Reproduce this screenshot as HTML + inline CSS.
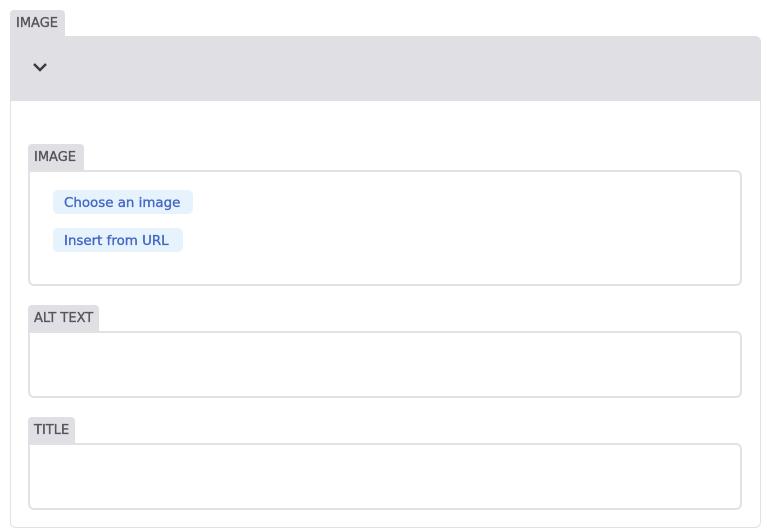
<!DOCTYPE html>
<html><head><style>
*{box-sizing:border-box;margin:0;padding:0}
body{width:767px;height:531px;background:#fff;font-family:"DejaVu Sans","Liberation Sans",sans-serif;position:relative;overflow:hidden}
.tab{position:absolute;background:#e0dfe4;color:#55545c;font-size:13px;line-height:28px;padding-left:6px;border-radius:4px 4px 0 0;-webkit-text-stroke:0.35px #55545c}
.box{position:absolute;border:2px solid #e2e2e6;border-radius:0 6px 6px 6px;background:#fff}
.btn{position:absolute;background:#e6f3fd;color:#4466c4;font-size:13.4px;line-height:27px;padding-left:11px;border-radius:5px;-webkit-text-stroke:0.35px #4466c4}
</style></head><body>
<div class="tab" style="left:10px;top:10px;width:55px;height:27px">IMAGE</div>
<div style="position:absolute;left:10px;top:36px;width:751px;height:492px;border:1.5px solid #e2e2e6;border-radius:0 6px 6px 6px"></div>
<div style="position:absolute;left:10px;top:36px;width:751px;height:65px;background:#e0dfe4;border-radius:0 6px 0 0"></div>
<svg style="position:absolute;left:32px;top:61px" width="16" height="12" viewBox="0 0 16 12"><path d="M2 3 L8 9 L14 3" fill="none" stroke="#3a3a40" stroke-width="2.4"/></svg>
<div class="tab" style="left:28px;top:144px;width:56px;height:27px">IMAGE</div>
<div class="box" style="left:28px;top:170px;width:714px;height:116px"></div>
<div class="btn" style="left:53px;top:190px;width:140px;height:24px">Choose an image</div>
<div class="btn" style="left:53px;top:228px;width:130px;height:24px">Insert from URL</div>
<div class="tab" style="left:28px;top:305px;width:71px;height:28px">ALT TEXT</div>
<div class="box" style="left:28px;top:331px;width:714px;height:67px"></div>
<div class="tab" style="left:28px;top:417px;width:47px;height:28px">TITLE</div>
<div class="box" style="left:28px;top:443px;width:714px;height:67px"></div>
</body></html>
